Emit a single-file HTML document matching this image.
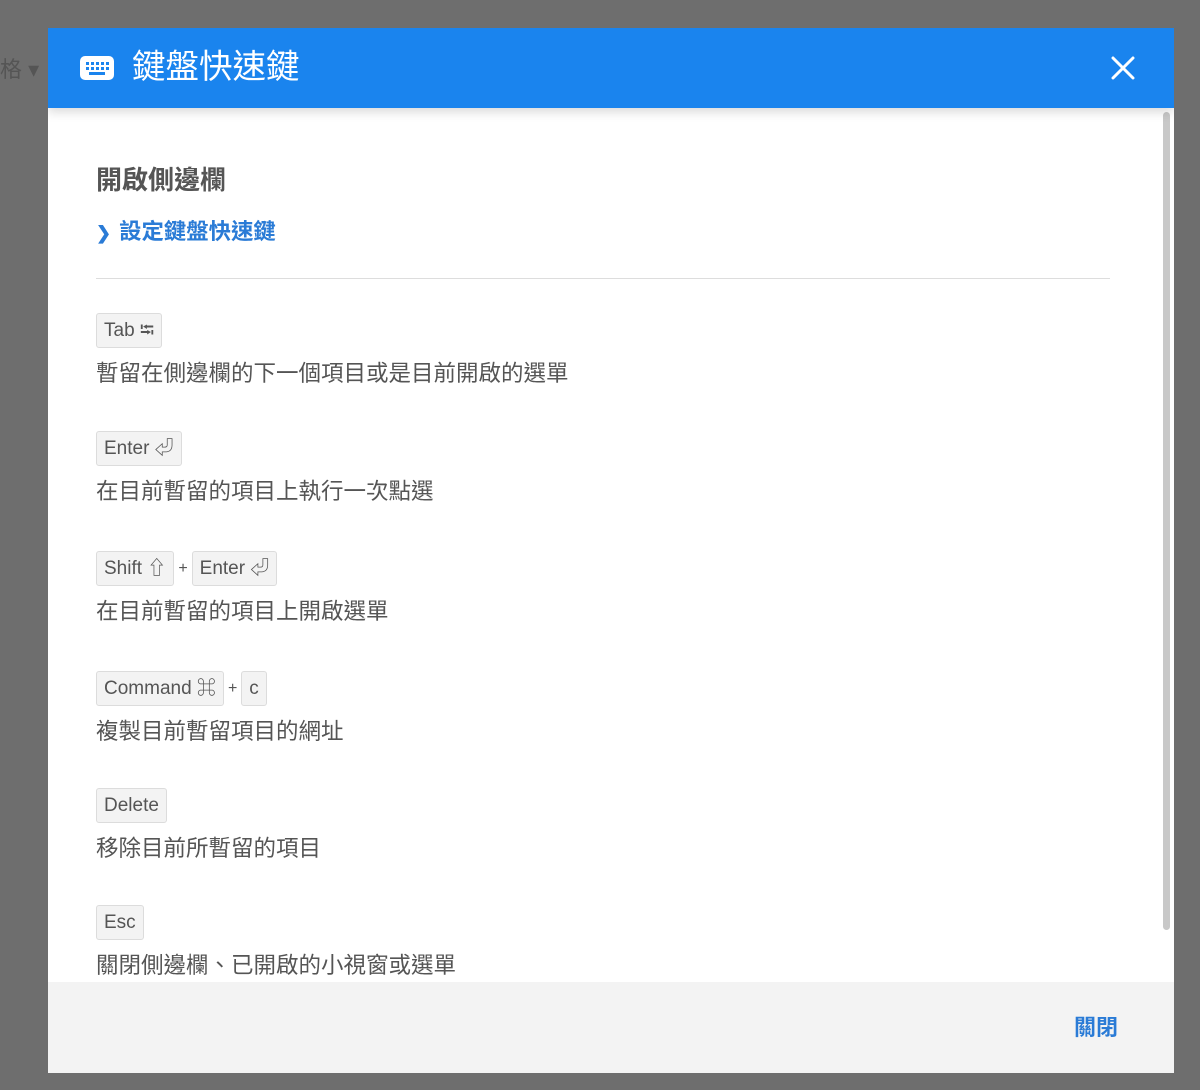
<!DOCTYPE html>
<html><head><meta charset="utf-8"><style>
*{margin:0;padding:0;box-sizing:border-box}
body{width:1200px;height:1090px;background:#6e6e6e;position:relative;overflow:hidden;font-family:"Liberation Sans","Noto Sans CJK TC",sans-serif}
.bgt{position:absolute;color:#555;font-size:22px}
.modal{position:absolute;left:48px;top:28px;width:1126px;height:1045px;background:#fff;overflow:hidden}
.hdr{position:absolute;left:0;top:0;width:1126px;height:80px;background:#1a84ee;box-shadow:0 4px 10px rgba(0,0,0,.15);z-index:2}
.hdr .t{position:absolute;left:84px;top:17px;font-size:33.5px;color:#fff;line-height:46px}
.sec{position:absolute;left:48px;font-size:26px;color:#555;font-weight:bold}
.lnk{position:absolute;left:48px;font-size:22.4px;color:#2a7bd6;font-weight:bold}
.hr{position:absolute;left:48px;top:250px;width:1014px;height:1px;background:#ddd}
.row{position:absolute;left:48px}
.k{display:inline-block;height:35px;line-height:33px;padding:0 7px;background:#f3f3f3;border:1px solid #dcdcdc;border-radius:3px;font-size:19px;color:#555;vertical-align:top}
.plus{display:inline-block;font-size:16px;color:#555;line-height:35px;margin:0 4px;vertical-align:top}
.d{font-size:22.5px;color:#555;margin-top:11px;line-height:30px}
.ftr{position:absolute;left:0;top:954px;width:1126px;height:91px;background:#f3f3f3}
.ftr span{position:absolute;right:56px;top:28px;font-size:22px;color:#2a7bd6;font-weight:bold}
.sb{position:absolute;left:1115px;top:84px;width:7px;height:818px;background:#c8c8c8;border-radius:4px}
</style></head><body>
<div class="bgt" style="left:0;top:52px">格 ▾</div>
<div class="modal">
<div class="hdr">
<svg style="position:absolute;left:32px;top:28px" width="34" height="24" viewBox="0 0 34 24"><rect x="0" y="0" width="34" height="24" rx="5" fill="#fff"/><g fill="#1a84ee"><rect x="6" y="6" width="3" height="3"/><rect x="11" y="6" width="3" height="3"/><rect x="16" y="6" width="3" height="3"/><rect x="21" y="6" width="3" height="3"/><rect x="26" y="6" width="3" height="3"/><rect x="6" y="11" width="3" height="3"/><rect x="11" y="11" width="3" height="3"/><rect x="16" y="11" width="3" height="3"/><rect x="21" y="11" width="3" height="3"/><rect x="26" y="11" width="3" height="3"/><rect x="9" y="16" width="16" height="3"/></g></svg>
<div class="t">鍵盤快速鍵</div>
<svg style="position:absolute;left:1063px;top:28px" width="24" height="24" viewBox="0 0 24 24"><path d="M2 2L22 22M22 2L2 22" stroke="#fff" stroke-width="3" stroke-linecap="round"/></svg>
</div>
<div class="sb"></div>
<div class="sec" style="top:132px">開啟側邊欄</div>
<div class="lnk" style="top:186px"><span style="font-size:18px;margin-right:8px">❯</span>設定鍵盤快速鍵</div>
<div class="hr"></div>
<div class="row" style="top:285px"><span class="k">Tab ⭾</span><div class="d">暫留在側邊欄的下一個項目或是目前開啟的選單</div></div>
<div class="row" style="top:403px"><span class="k">Enter ⏎</span><div class="d">在目前暫留的項目上執行一次點選</div></div>
<div class="row" style="top:523px"><span class="k">Shift ⇧</span><span class="plus">+</span><span class="k">Enter ⏎</span><div class="d">在目前暫留的項目上開啟選單</div></div>
<div class="row" style="top:643px"><span class="k">Command ⌘</span><span class="plus">+</span><span class="k">c</span><div class="d">複製目前暫留項目的網址</div></div>
<div class="row" style="top:760px"><span class="k">Delete</span><div class="d">移除目前所暫留的項目</div></div>
<div class="row" style="top:877px"><span class="k">Esc</span><div class="d">關閉側邊欄、已開啟的小視窗或選單</div></div>
<div class="ftr"><span>關閉</span></div>
</div>
</body></html>
